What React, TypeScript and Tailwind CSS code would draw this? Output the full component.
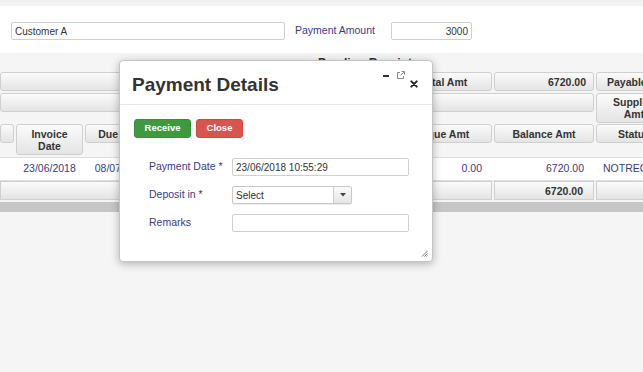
import React from "react";

const hdr =
  "shrink-0 rounded-[3px] border border-[#cfcfcf] bg-gradient-to-b from-[#fbfbfb] to-[#e4e4e4] text-[10.5px] font-bold text-[#333] leading-[12px]";

export default function App() {
  return (
    <div className="relative w-[643px] h-[372px] overflow-hidden bg-[#f5f5f5] font-['Liberation_Sans',Arial,sans-serif]">
      {/* top strip */}
      <div className="h-[6px] bg-[#f2f2f2]" />
      {/* filter panel */}
      <div className="h-[47px] bg-white pt-[16px] pl-[11px] flex items-start">
        <div className="w-[274px] h-[18px] border border-[#cfcfcf] rounded-[2px] bg-white flex items-center pl-[3px] text-[10px] text-[#333]">
          Customer A
        </div>
        <div className="ml-[10px] h-[18px] flex items-center text-[10.5px] text-[#3a3a85]">Payment Amount</div>
        <div className="ml-[16px] w-[81px] h-[18px] border border-[#cfcfcf] rounded-[2px] bg-white flex items-center justify-end pr-[3px] text-[10px] text-[#333]">
          3000
        </div>
      </div>

      {/* grid section */}
      <div className="h-[19px] pl-[318px] pt-[3px] text-[12px] font-bold text-[#333] leading-[14px]">Pending Receipts</div>
      <div className="w-[720px]">
        {/* row 1 */}
        <div className="flex items-start gap-[2px]">
          <div className={`${hdr} w-[410px] h-[19px]`} />
          <div className={`${hdr} w-[80px] h-[19px] flex items-center pl-[7px]`}>Total Amt</div>
          <div className={`${hdr} w-[100px] h-[19px] flex items-center justify-end pr-[7px]`}>6720.00</div>
          <div className={`${hdr} w-[100px] h-[19px] flex items-center pl-[10px] whitespace-nowrap`}>Payable Amt</div>
        </div>
        {/* row 2 */}
        <div className="mt-[2px] flex items-start gap-[2px]">
          <div className={`${hdr} w-[594px] h-[19px]`} />
          <div className={`${hdr} w-[76px] h-[30px] flex flex-col items-center justify-center`}>
            <span>Supplier</span>
            <span>Amt</span>
          </div>
        </div>
        {/* row 3 */}
        <div className="mt-[1px] flex items-start gap-[2px]">
          <div className={`${hdr} w-[14px] h-[19px]`} />
          <div className={`${hdr} w-[67px] h-[31px] flex flex-col items-center justify-center`}>
            <span>Invoice</span>
            <span>Date</span>
          </div>
          <div className={`${hdr} w-[72px] h-[19px] flex items-center justify-center`}>Due Date</div>
          <div className={`${hdr} w-[76px] h-[19px] flex items-center justify-center`}>Invoice Amt</div>
          <div className={`${hdr} w-[73px] h-[19px] flex items-center justify-center`}>Paid Amt</div>
          <div className={`${hdr} w-[71px] h-[19px] flex items-center justify-center`}>Cash Amt</div>
          <div className={`${hdr} w-[107px] h-[19px] flex items-center justify-center`}>Cheque Amt</div>
          <div className={`${hdr} w-[100px] h-[19px] flex items-center justify-center`}>Balance Amt</div>
          <div className={`${hdr} w-[76px] h-[19px] flex items-center justify-center`}>Status</div>
        </div>
        {/* data row */}
        <div className="mt-[2px] h-[24px] bg-white border-y border-[#dedede] flex items-center gap-[2px] text-[10.5px] text-[#3b3b78]">
          <div className="w-[14px] shrink-0" />
          <div className="w-[67px] shrink-0 text-center">23/06/2018</div>
          <div className="w-[72px] shrink-0 text-center">08/07/2018</div>
          <div className="w-[76px] shrink-0 text-right pr-[10px]">6720.00</div>
          <div className="w-[73px] shrink-0 text-right pr-[10px]">0.00</div>
          <div className="w-[71px] shrink-0 text-right pr-[10px]">0.00</div>
          <div className="w-[107px] shrink-0 text-right pr-[10px]">0.00</div>
          <div className="w-[100px] shrink-0 text-right pr-[10px]">6720.00</div>
          <div className="w-[80px] shrink-0 pl-[7px] whitespace-nowrap">NOTRECEIVED</div>
        </div>
        {/* footer row */}
        <div className="flex items-start gap-[2px]">
          <div className={`${hdr} w-[492px] h-[19px] rounded-none`} />
          <div className={`${hdr} w-[100px] h-[19px] rounded-none flex items-center justify-end pr-[10px]`}>6720.00</div>
          <div className={`${hdr} w-[100px] h-[19px] rounded-none`} />
        </div>
        {/* scrollbar */}
        <div className="mt-[2px] h-[10px] bg-[#c6c6c6]" />
      </div>

      {/* dialog */}
      <div className="absolute left-[119px] top-[60px] w-[314px] h-[202px] bg-white border border-[#c4c4c4] rounded-[4px] shadow-[0_2px_8px_rgba(0,0,0,0.28)]">
        <div className="h-[44px] border-b border-[#e5e5e5] pl-[12px] pt-[13px]">
          <div className="text-[19px] font-bold leading-[22px] text-[#333]">Payment Details</div>
        </div>
        {/* title icons */}
        <div className="absolute left-[263px] top-[14px] w-[6px] h-[2px] bg-[#333]" />
        <svg className="absolute left-[277px] top-[10px]" width="8" height="8" viewBox="0 0 8 8">
          <path d="M3 1.5H0.5V7.5H6.5V5" fill="none" stroke="#888" strokeWidth="1" />
          <path d="M4.5 0.5H7.5V3.5M7.5 0.5L3.5 4.5" fill="none" stroke="#888" strokeWidth="1" />
        </svg>
        <svg className="absolute left-[290px] top-[19px]" width="8" height="8" viewBox="0 0 8 8">
          <path d="M1.3 1.3L6.7 6.7M6.7 1.3L1.3 6.7" stroke="#222" strokeWidth="1.9" strokeLinecap="round" />
        </svg>

        {/* body */}
        <div className="pt-[14px] pl-[14px] flex gap-[5px]">
          <div className="w-[57px] h-[19px] rounded-[3px] bg-[#3f9a3f] border border-[#398c39] flex items-center justify-center text-[9.5px] font-bold text-white">
            Receive
          </div>
          <div className="w-[47px] h-[19px] rounded-[3px] bg-[#d9534f] border border-[#cf4b47] flex items-center justify-center text-[9.5px] font-bold text-white">
            Close
          </div>
        </div>
        <div className="mt-[20px] pl-[29px] flex flex-col gap-[10px] text-[10.5px] text-[#3a3a85]">
          <div className="flex items-center h-[18px]">
            <div className="w-[83px] shrink-0">Payment Date *</div>
            <div className="w-[177px] h-[18px] border border-[#cfcfcf] rounded-[2px] flex items-center pl-[3px] text-[10px] text-[#333]">
              23/06/2018 10:55:29
            </div>
          </div>
          <div className="flex items-center h-[18px]">
            <div className="w-[83px] shrink-0">Deposit in *</div>
            <div className="w-[120px] h-[18px] border border-[#c8c8c8] rounded-[2px] flex items-stretch text-[10px] text-[#333] shadow-[0_1px_1px_rgba(0,0,0,0.08)]">
              <div className="flex-1 flex items-center pl-[3px]">Select</div>
              <div className="w-[18px] border-l border-[#cfcfcf] bg-gradient-to-b from-[#fafafa] to-[#e6e6e6] flex items-center justify-center">
                <svg width="6" height="4" viewBox="0 0 6 4">
                  <path d="M0 0H6L3 3.5Z" fill="#444" />
                </svg>
              </div>
            </div>
          </div>
          <div className="flex items-center h-[18px]">
            <div className="w-[83px] shrink-0">Remarks</div>
            <div className="w-[177px] h-[18px] border border-[#cfcfcf] rounded-[2px]" />
          </div>
        </div>
        <svg className="absolute right-[4px] bottom-[4px]" width="7" height="7" viewBox="0 0 7 7">
          <path d="M1 6.5L6.5 1M3.5 6.5L6.5 3.5M5.5 6.5L6.5 5.5" stroke="#777" strokeWidth="1" />
        </svg>
      </div>
    </div>
  );
}
